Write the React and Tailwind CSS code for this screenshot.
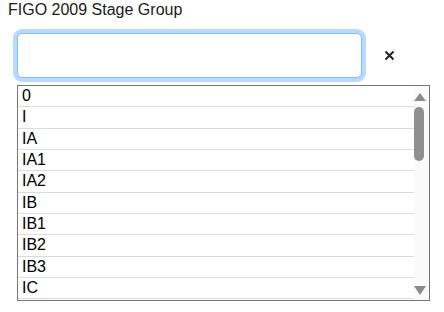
const stages = ['0', 'I', 'IA', 'IA1', 'IA2', 'IB', 'IB1', 'IB2', 'IB3', 'IC'];

export default function App() {
  return (
    <div className="pl-2 pt-[1px] font-['Liberation_Sans',Arial,sans-serif] text-[16px] text-[#1a1a1a]">
      <div className="leading-[18px]">FIGO 2009 Stage Group</div>

      <div className="ml-[9px] mt-[14px] flex items-center">
        <input
          className="w-[345px] h-[45px] border border-[#80bdff] rounded-[5px] bg-white shadow-[0_0_0_4px_rgba(0,123,255,0.28)] outline-none px-3"
          autoFocus
        />
        <button className="ml-[22px] text-[#222]">
          <svg width="11" height="11" viewBox="0 0 11 11">
            <path d="M1.5 1.5L9.5 9.5M9.5 1.5L1.5 9.5" stroke="currentColor" strokeWidth="2" />
          </svg>
        </button>
      </div>

      <div className="ml-[9px] mt-[7px] w-[413px] h-[216px] border border-[#767676] overflow-hidden bg-white flex">
        <div className="flex-1">
          {stages.map((s) => (
            <div
              key={s}
              className="h-[21.33px] border-b border-[#dcdcdc] pl-1 leading-[19px] text-black"
            >
              {s}
            </div>
          ))}
        </div>

        {/* scrollbar */}
        <div className="w-[15px] bg-[#fafafa] flex flex-col">
          <svg className="mt-[7px]" width="12" height="8" viewBox="0 0 12 8">
            <path d="M6 0L12 8H0Z" fill="#8c8c8c" />
          </svg>
          <div className="mt-[6px] w-[10px] h-[54px] rounded-full bg-[#8f8f8f]" />
          <div className="flex-1" />
          <svg className="mb-[5px]" width="12" height="9" viewBox="0 0 12 9">
            <path d="M0 0H12L6 9Z" fill="#8c8c8c" />
          </svg>
        </div>
      </div>
    </div>
  );
}
